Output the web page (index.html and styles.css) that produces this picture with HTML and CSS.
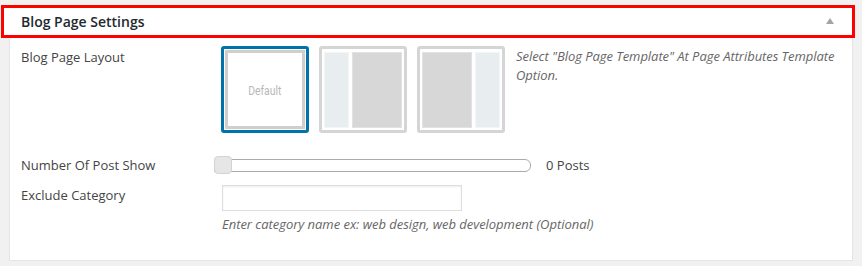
FILE: index.html
```html
<!DOCTYPE html>
<html>
<head>
<meta charset="utf-8">
<link rel="stylesheet" href="styles.css">
</head>
<body>
<div class="hdr">
  <h2 class="hdr-title">Blog Page Settings</h2>
  <span class="toggle"></span>
</div>
<div class="panel">
  <div class="row row-layout">
    <div class="label">Blog Page Layout</div>
    <div class="field layouts">
      <div class="opt opt-active"><div class="opt-inner"><span class="def">Default</span></div></div>
      <div class="opt"><div class="opt-cols"><div class="side"></div><div class="main"></div></div></div>
      <div class="opt"><div class="opt-cols"><div class="main"></div><div class="side"></div></div></div>
      <p class="desc">Select "Blog Page Template" At Page Attributes Template Option.</p>
    </div>
  </div>
  <div class="row row-slider">
    <div class="label">Number Of Post Show</div>
    <div class="field slider-field">
      <div class="slider"><div class="track"></div><div class="handle"></div></div>
      <span class="count">0 Posts</span>
    </div>
  </div>
  <div class="row row-cat">
    <div class="label">Exclude Category</div>
    <div class="field">
      <div class="input"></div>
      <p class="help">Enter category name ex: web design, web development (Optional)</p>
    </div>
  </div>
</div>
</body>
</html>
```
FILE: styles.css
```css
html, body {
  margin: 0;
  padding: 0;
  background: #f1f1f1;
  font-family: "Open Sans", "DejaVu Sans", sans-serif;
  color: #444;
  font-size: 13px;
}
.hdr {
  margin: 5px 7px 0 1px;
  height: 27px;
  border: 3px solid #ff0000;
  background: #fff;
  display: flex;
  align-items: center;
  padding: 0 18px 0 17px;
}
.hdr-title {
  margin: 0;
  flex: 1;
  font-size: 14px;
  font-weight: 600;
  color: #23282d;
  line-height: 20px;
}
.toggle {
  width: 0;
  height: 0;
  border-left: 4px solid transparent;
  border-right: 4px solid transparent;
  border-bottom: 6px solid #a0a5aa;
  margin-top: -1px;
}
.panel {
  margin-left: 9px;
  width: 842px;
  background: #fff;
  border: 1px solid #e5e5e5;
  border-top: none;
  box-shadow: 0 1px 1px rgba(0,0,0,0.04);
  padding: 8px 0 26px 0;
}
.row {
  display: grid;
  grid-template-columns: 200px 1fr;
  padding: 0 11px;
}
.label {
  line-height: 20px;
  color: #444;
}
.row-layout .label { padding-top: 1px; }
.layouts {
  display: flex;
  align-items: flex-start;
  gap: 10px;
}
.opt {
  width: 88px;
  height: 87px;
  box-sizing: border-box;
  border: 3px solid #d5d5d5;
  border-radius: 3px;
  padding: 2px;
  background: #fff;
}
.opt-active {
  border-color: #0073aa;
  padding: 1px;
}
.opt-inner {
  height: 100%;
  box-sizing: border-box;
  border: 3px solid #cfcfcf;
  display: flex;
  align-items: center;
  justify-content: center;
  padding-top: 1px;
}
.def {
  font-family: "Roboto", "Liberation Sans", sans-serif;
  font-size: 13px;
  color: #b8b8b8;
  transform: scaleX(0.8);
}
.opt-cols {
  height: 100%;
  display: flex;
  gap: 3px;
  padding-top: 1px;
  box-sizing: border-box;
}
.side {
  width: 25px;
  background: #e8edf0;
  box-sizing: border-box;
  border: 1px solid #f3f5f7;
}
.main {
  flex: 1;
  background: #d7d7d7;
  box-sizing: border-box;
  border: 1px solid #e2e2e2;
}
.desc {
  margin: 0 0 0 1px;
  font-style: italic;
  color: #666;
  line-height: 19px;
  padding-top: 1px;
  width: 330px;
  letter-spacing: -0.05px;
}
.row-slider { margin-top: 22px; }
.slider-field {
  display: flex;
  align-items: center;
  height: 20px;
}
.slider {
  width: 317px;
  height: 18px;
  margin-left: -7px;
  display: flex;
  align-items: center;
  position: relative;
}
.track {
  flex: 1;
  height: 13px;
  box-sizing: border-box;
  border: 1px solid #aaa;
  border-radius: 0 6px 6px 0;
  background: #fff;
}
.handle {
  position: absolute;
  left: 0;
  top: 0;
  width: 18px;
  height: 18px;
  box-sizing: border-box;
  border: 1px solid #d3d3d3;
  border-radius: 4px;
  background: #e6e6e6;
}
.count {
  margin-left: 15px;
  color: #444;
}
.row-cat { margin-top: 10px; }
.input {
  width: 240px;
  height: 26px;
  box-sizing: border-box;
  border: 1px solid #ddd;
  box-shadow: inset 0 1px 2px rgba(0,0,0,0.07);
  background: #fff;
  margin-left: 1px;
}
.help {
  margin: 3px 0 0 1px;
  font-style: italic;
  color: #666;
  line-height: 20px;
  letter-spacing: -0.03px;
}
```
